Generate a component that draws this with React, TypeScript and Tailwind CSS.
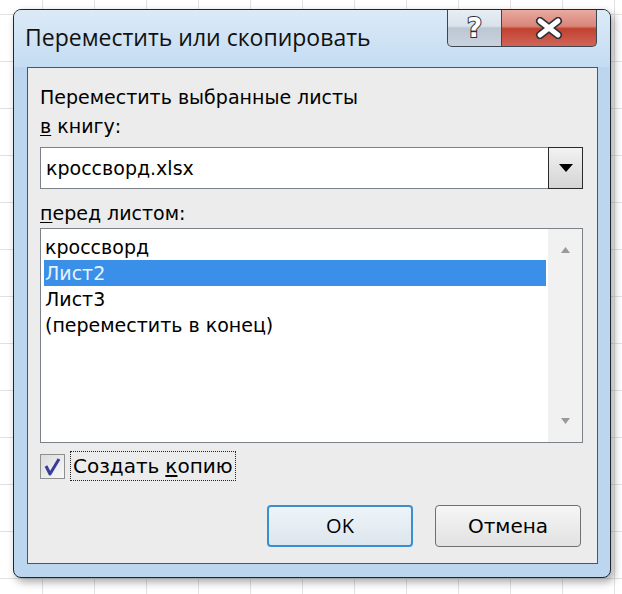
import { useState } from "react"

const sheets = ["кроссворд", "Лист2", "Лист3", "(переместить в конец)"]

const TitleButtons = () => {
    return (
        <div className="flex h-[37px]">
            <div className="w-[55px] h-full flex items-center justify-center rounded-bl-[5px] border border-t-0 border-[#3b4652] bg-[linear-gradient(to_bottom,#e9eef4_0%,#d9e1ea_45%,#bcc7d4_50%,#c9d3de_100%)]">
                <span className="text-[26px] font-bold leading-none text-white [-webkit-text-stroke:2px_#2b2f36] [paint-order:stroke_fill]" style={{ fontFamily: "'DejaVu Sans', sans-serif" }}>?</span>
            </div>
            <div className="w-[95px] h-full flex items-center justify-center rounded-br-[5px] border border-t-0 border-l-0 border-[#3b4652] bg-[linear-gradient(to_bottom,#e8aaa0_0%,#d9857a_45%,#c2412f_52%,#d0655a_100%)]">
                <svg width="30" height="22" viewBox="0 0 30 22">
                    <path d="M6 4 L24 18 M24 4 L6 18" stroke="#2b2f36" strokeWidth="8" strokeLinecap="round" />
                    <path d="M6 4 L24 18 M24 4 L6 18" stroke="#ffffff" strokeWidth="5" strokeLinecap="round" />
                </svg>
            </div>
        </div>
    )
}

const App = () => {
    const [selected, setSelected] = useState(1)
    const [copy, setCopy] = useState(true)

    return (
        <div className="w-[622px] h-[594px] overflow-hidden pt-[9px] pl-[13px] bg-white bg-[linear-gradient(to_right,#e2e2e2_1px,transparent_1px),linear-gradient(to_bottom,#e2e2e2_1px,transparent_1px)] bg-[size:52px_47px] bg-[position:42px_14px]" style={{ fontFamily: "'DejaVu Sans', sans-serif" }}>
            <div className="w-[598px] h-[569px] flex flex-col rounded-[8px] border border-[#1e2730] bg-[#bcd6ef] shadow-[3px_4px_8px_rgba(0,0,0,0.35)]">
                <div className="h-[57px] flex items-start justify-between rounded-t-[7px] bg-[linear-gradient(to_bottom,#dceaf7,#c4dcf2)]">
                    <div className="pl-[11px] pt-[12px] text-[23px] leading-[30px] text-[#111]" style={{ fontFamily: "'Open Sans', sans-serif" }}>
                        Переместить или скопировать
                    </div>
                    <div className="mr-[13px]">
                        <TitleButtons />
                    </div>
                </div>
                <div className="ml-[13px] mr-[12px] h-[497px] flex flex-col border border-[#4c5663] bg-[#ececec] pl-[12px] pr-[14px]">
                    <div className="mt-[18px] h-[22px] leading-[22px] text-[19px] text-black">Переместить выбранные листы</div>
                    <div className="mt-[7px] h-[22px] leading-[22px] text-[19px] text-black"><span className="underline underline-offset-2">в</span> книгу:</div>
                    <div className="mt-[10px] h-[42px] flex border border-[#7d8189] bg-white">
                        <div className="flex-1 flex items-center pl-[5px] text-[19px] text-black">кроссворд.xlsx</div>
                        <div className="w-[35px] -my-px -mr-px flex items-center justify-center border border-[#2a2a2a] bg-[linear-gradient(to_bottom,#f2f2f2,#d4d4d4)]">
                            <svg width="14" height="8" viewBox="0 0 14 8"><path d="M0 0 H14 L7 8 Z" fill="#000" /></svg>
                        </div>
                    </div>
                    <div className="mt-[13px] h-[22px] leading-[22px] text-[19px] text-black"><span className="underline underline-offset-2">п</span>еред листом:</div>
                    <div className="mt-[4px] h-[215px] flex border border-[#7d8189] bg-white">
                        <div className="flex-1 pt-[5px] pl-[3px] pr-[2px]">
                            {sheets.map((name, i) => (
                                <div
                                    key={name}
                                    onClick={() => setSelected(i)}
                                    className={`h-[26px] flex items-center pl-[1px] text-[19px] ${i === selected ? "bg-[#3a8fe8] text-[#e8f2ff]" : "text-black"}`}
                                >
                                    {name}
                                </div>
                            ))}
                        </div>
                        <div className="w-[34px] flex flex-col items-center justify-between py-[18px] bg-[#f1f1f1]">
                            <svg width="9" height="6" viewBox="0 0 9 6"><path d="M0 6 L4.5 0 L9 6 Z" fill="#9a9a9a" /></svg>
                            <svg width="9" height="6" viewBox="0 0 9 6"><path d="M0 0 H9 L4.5 6 Z" fill="#9a9a9a" /></svg>
                        </div>
                    </div>
                    <div className="mt-[8px] h-[30px] flex items-center">
                        <button
                            onClick={() => setCopy(!copy)}
                            className="w-[25px] h-[25px] flex items-center justify-center border border-[#8e8f8f] bg-[linear-gradient(135deg,#dcdcdc,#f8f8f8)]"
                        >
                            {copy && (
                                <svg width="21" height="21" viewBox="0 0 21 21">
                                    <path d="M4 10 L8 18 L17 3" stroke="#3a3d98" strokeWidth="3" fill="none" strokeLinejoin="round" />
                                </svg>
                            )}
                        </button>
                        <div className="ml-[5px] h-[30px] flex items-center px-[2px] border border-dotted border-[#222] text-[20px] text-black">
                            Создать <span className="ml-[6px] underline underline-offset-2">к</span>опию
                        </div>
                    </div>
                    <div className="mt-[24px] flex justify-end gap-[22px] pr-[2px]">
                        <button className="w-[146px] h-[42px] rounded-[4px] border-2 border-[#3c8fcf] bg-[linear-gradient(to_bottom,#eef4f8,#dde6ee)] text-[20px] text-black" style={{ fontFamily: "'Open Sans', sans-serif" }}>OK</button>
                        <button className="w-[146px] h-[42px] rounded-[4px] border border-[#707070] bg-[linear-gradient(to_bottom,#f6f6f6,#e2e2e2)] text-[20px] text-black">Отмена</button>
                    </div>
                </div>
            </div>
        </div>
    )
}

export default App
